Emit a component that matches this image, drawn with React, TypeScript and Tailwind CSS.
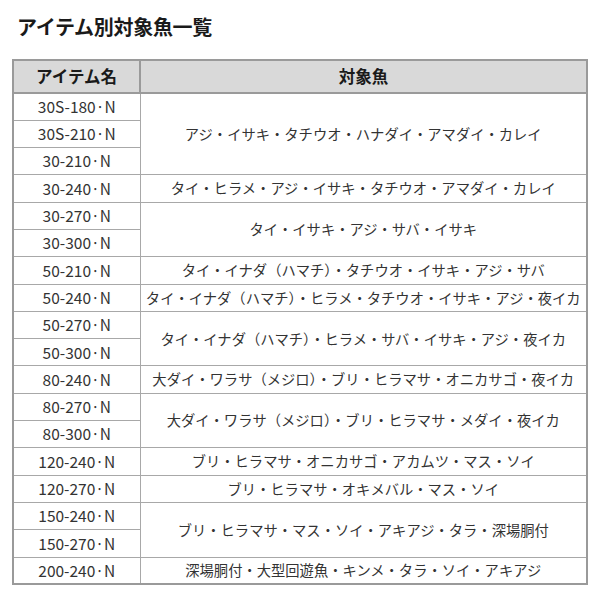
import React from 'react';

type Group = { items: string[]; fish: string };

const groups: Group[] = [
  { items: ['30S-180·N', '30S-210·N', '30-210·N'], fish: 'アジ・イサキ・タチウオ・ハナダイ・アマダイ・カレイ' },
  { items: ['30-240·N'], fish: 'タイ・ヒラメ・アジ・イサキ・タチウオ・アマダイ・カレイ' },
  { items: ['30-270·N', '30-300·N'], fish: 'タイ・イサキ・アジ・サバ・イサキ' },
  { items: ['50-210·N'], fish: 'タイ・イナダ（ハマチ）・タチウオ・イサキ・アジ・サバ' },
  { items: ['50-240·N'], fish: 'タイ・イナダ（ハマチ）・ヒラメ・タチウオ・イサキ・アジ・夜イカ' },
  { items: ['50-270·N', '50-300·N'], fish: 'タイ・イナダ（ハマチ）・ヒラメ・サバ・イサキ・アジ・夜イカ' },
  { items: ['80-240·N'], fish: '大ダイ・ワラサ（メジロ）・ブリ・ヒラマサ・オニカサゴ・夜イカ' },
  { items: ['80-270·N', '80-300·N'], fish: '大ダイ・ワラサ（メジロ）・ブリ・ヒラマサ・メダイ・夜イカ' },
  { items: ['120-240·N'], fish: 'ブリ・ヒラマサ・オニカサゴ・アカムツ・マス・ソイ' },
  { items: ['120-270·N'], fish: 'ブリ・ヒラマサ・オキメバル・マス・ソイ' },
  { items: ['150-240·N', '150-270·N'], fish: 'ブリ・ヒラマサ・マス・ソイ・アキアジ・タラ・深場胴付' },
  { items: ['200-240·N'], fish: '深場胴付・大型回遊魚・キンメ・タラ・ソイ・アキアジ' },
];

const font = { fontFamily: '"Noto Sans CJK JP", "Noto Sans", sans-serif' };

export default function App() {
  return (
    <div className="w-[600px] h-[600px] bg-white px-[12px]" style={font}>
      <h1 className="pt-[13px] pl-[5px] text-[20px] leading-[28px] font-bold text-[#1a1a1a] tracking-[-0.3px]">
        アイテム別対象魚一覧
      </h1>
      <table className="mt-[18px] w-[576px] border-collapse border-2 border-[#9a9a9a] text-[#333]">
        <thead>
          <tr className="bg-[#d9d9d9]">
            <th className="w-[127px] h-[33px] border-2 border-[#9a9a9a] text-[16.5px] font-bold text-[#1a1a1a] p-0">
              アイテム名
            </th>
            <th className="h-[33px] border-2 border-[#9a9a9a] text-[16.5px] font-bold text-[#1a1a1a] p-0">
              対象魚
            </th>
          </tr>
        </thead>
        <tbody>
          {groups.map((g) =>
            g.items.map((item, i) => (
              <tr key={item}>
                <td className="h-[27.3px] border border-[#a8a8a8] text-center text-[15.5px] leading-none p-0">
                  {item}
                </td>
                {i === 0 && (
                  <td
                    rowSpan={g.items.length}
                    className="border border-[#a8a8a8] text-center text-[14.3px] leading-none p-0 whitespace-nowrap"
                  >
                    {g.fish}
                  </td>
                )}
              </tr>
            ))
          )}
        </tbody>
      </table>
    </div>
  );
}
